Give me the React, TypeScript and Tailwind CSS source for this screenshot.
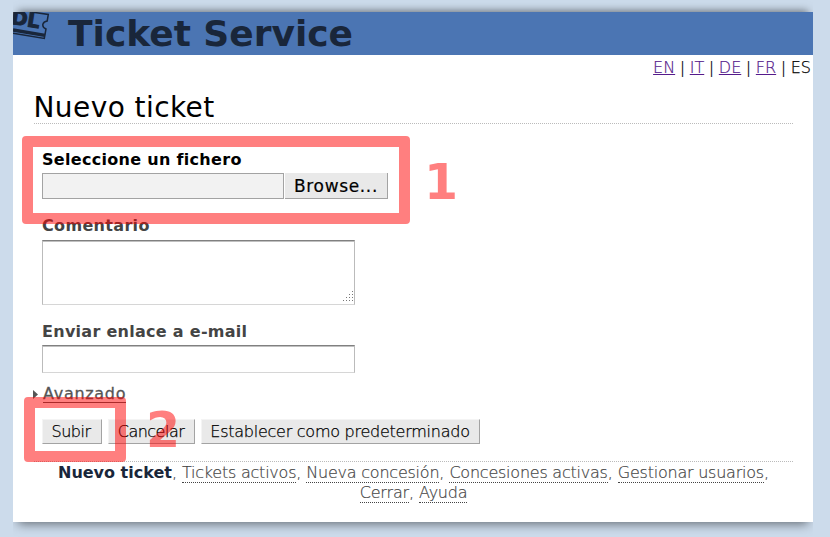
import React from "react";

const languages = ["EN", "IT", "DE", "FR"];

function Logo() {
  return (
    <svg width="37" height="28" viewBox="0 0 37 28" className="shrink-0" fill="none">
      <g transform="rotate(9)" fill="#19263a" stroke="#19263a" strokeWidth="0.9">
        <text x="-1" y="12" fontSize="20" fontWeight="bold" fontFamily="DejaVu Sans" textLength="29">DL</text>
      </g>
      <path d="M20 0.2L35.300 2.500L34.200 9Q30.500 9.500 29.800 12.500Q29.500 15.500 33 17L31.300 26.400L0 21.300" stroke="#19263a" strokeWidth="1.5" />
      <path d="M0 18L32 23.400" stroke="#19263a" strokeWidth="3.400" />
    </svg>
  );
}

function Button({ label, className }: { label: string; className: string }) {
  return (
    <button
      className={`h-[25px] border-r border-b border-[#a3a3a3] border-t border-l border-t-[#f4f4f4] border-l-[#f4f4f4] bg-[#e9e9e9] text-center leading-[23px] whitespace-nowrap text-black [-webkit-text-stroke:0.25px_#000] ${className}`}
    >
      {label}
    </button>
  );
}

function FooterLink({ label }: { label: string }) {
  return (
    <a className="inline-block h-[20px] border-b border-dotted border-[#444] tracking-[-0.23px] whitespace-nowrap">
      {label}
    </a>
  );
}

export default function App() {
  return (
    <div className="relative h-[537px] w-[830px] overflow-hidden bg-[#ccdbeb] px-[13px] pt-[12px] font-['DejaVu_Sans',sans-serif] text-[16px] text-black">
      <div className="h-[510px] w-[800px] bg-white shadow-[0_-6px_8px_-5px_rgba(0,0,0,0.5),0_7px_10px_-5px_rgba(0,0,0,0.5)] [clip-path:inset(-12px_0_-15px_0)]">
        <header className="flex h-[43px] overflow-hidden bg-[#4b75b3] text-[#19263a]">
          <Logo />
          <h1 className="ml-[18px] pt-px text-[36px] leading-[42px] font-bold whitespace-nowrap">Ticket Service</h1>
        </header>
        <nav className="flex h-[25px] justify-end gap-[4.6px] pr-[2px] leading-[25px] font-extralight">
          {languages.map((l) => (
            <React.Fragment key={l}>
              <a className="text-[#551a8b] underline [-webkit-text-stroke:0.2px_#551a8b]">{l}</a>
              <span className="[-webkit-text-stroke:0.2px_#000]">|</span>
            </React.Fragment>
          ))}
          <span className="[-webkit-text-stroke:0.25px_#000]">ES</span>
        </nav>
        <main className="ml-[21px] w-[759px]">
          <h2 className="h-[44px] border-b border-dotted border-[#bbb] pt-[11px] text-[28px] leading-[34px] tracking-[0.42px]"><span className="-ml-[0.5px]">Nuevo ticket</span></h2>
          <form className="ml-[8px]">
            <label className="mt-[26px] block h-[23px] leading-[20px] font-bold tracking-[0.3px] whitespace-nowrap">Seleccione un fichero</label>
            <div className="flex h-[26px]">
              <div className="w-[242px] border border-[#a3a3a3] bg-[#f2f2f2]" />
              <div className="ml-px h-[26px] w-[103px] border-r border-b border-[#a3a3a3] bg-[#e9e9e9] text-center text-[17px] leading-[26px] tracking-[0.65px] [-webkit-text-stroke:0.2px_#000]">Browse...</div>
            </div>
            <label className="mt-[17px] block h-[24px] leading-[20px] font-bold tracking-[0.33px] text-[#444]">Comentario</label>
            <div className="flex h-[65px] w-[313px] items-end justify-end border border-x-[#bbb] border-t-[#808080] border-b-[#d6d6d6] shadow-[inset_0_1px_0_#c0c0c0]">
              <svg width="12" height="13" viewBox="0 0 12 13" fill="#777">
                <path d="M10 0h1v1h-1zM7 3h1v1h-1zM10 3h1v1h-1zM4 6h1v1h-1zM7 6h1v1h-1zM10 6h1v1h-1zM1 9h1v1h-1zM4 9h1v1h-1zM7 9h1v1h-1zM10 9h1v1h-1z" />
              </svg>
            </div>
            <label className="mt-[17px] block h-[23px] leading-[20px] font-bold tracking-[0.28px] whitespace-nowrap text-[#444]">Enviar enlace a e-mail</label>
            <div className="h-[28px] w-[313px] border border-x-[#bbb] border-t-[#808080] border-b-[#d6d6d6] shadow-[inset_0_1px_0_#c0c0c0]" />
            <div className="mt-[11px] -ml-[9px] flex h-[20px] items-start text-[#555]">
              <svg width="10" height="20" viewBox="0 0 10 20" fill="#555"><path d="M0 6L5 10.500L0 15z" /></svg>
              <a className="h-[19px] border-b border-[#555] leading-[20px] tracking-[0.7px] [-webkit-text-stroke:0.3px_#555]">Avanzado</a>
            </div>
            <div className="mt-[15px] flex gap-[6px] font-extralight">
              <Button label="Subir" className="w-[60px] pr-[2px] tracking-[-0.5px]" />
              <Button label="Cancelar" className="w-[87px] pr-px tracking-[-0.5px]" />
              <Button label="Establecer como predeterminado" className="w-[279px] pr-px tracking-[-0.25px]" />
            </div>
          </form>
          <footer className="mt-[17px] border-t border-dotted border-[#bbb] pt-px text-center leading-[20px] font-extralight text-[#444] [-webkit-text-stroke:0.2px_#444]">
            <div className="flex justify-center gap-[5px]">
              <span><b className="font-bold text-[#19263a] [-webkit-text-stroke:0]">Nuevo ticket</b>,</span>
              <span><FooterLink label="Tickets activos" />,</span>
              <span><FooterLink label="Nueva concesión" />,</span>
              <span><FooterLink label="Concesiones activas" />,</span>
              <span><FooterLink label="Gestionar usuarios" />,</span>
            </div>
            <div className="flex justify-center gap-[5px]">
              <span><FooterLink label="Cerrar" />,</span>
              <span><FooterLink label="Ayuda" /></span>
            </div>
          </footer>
        </main>
      </div>
      <div className="absolute top-[136px] left-[22px] h-[88px] w-[388px] rounded-[4px] border-[11px] border-[#ff0000]/50" />
      <div className="absolute top-[397px] left-[24px] h-[65px] w-[102px] rounded-[4px] border-[11px] border-[#ff0000]/50" />
      <span className="absolute top-[154px] left-[424px] text-[49px] leading-[58px] font-bold text-[#ff0000]/50">1</span>
      <span className="absolute top-[402px] left-[146px] text-[49px] leading-[58px] font-bold text-[#ff0000]/50">2</span>
    </div>
  );
}
